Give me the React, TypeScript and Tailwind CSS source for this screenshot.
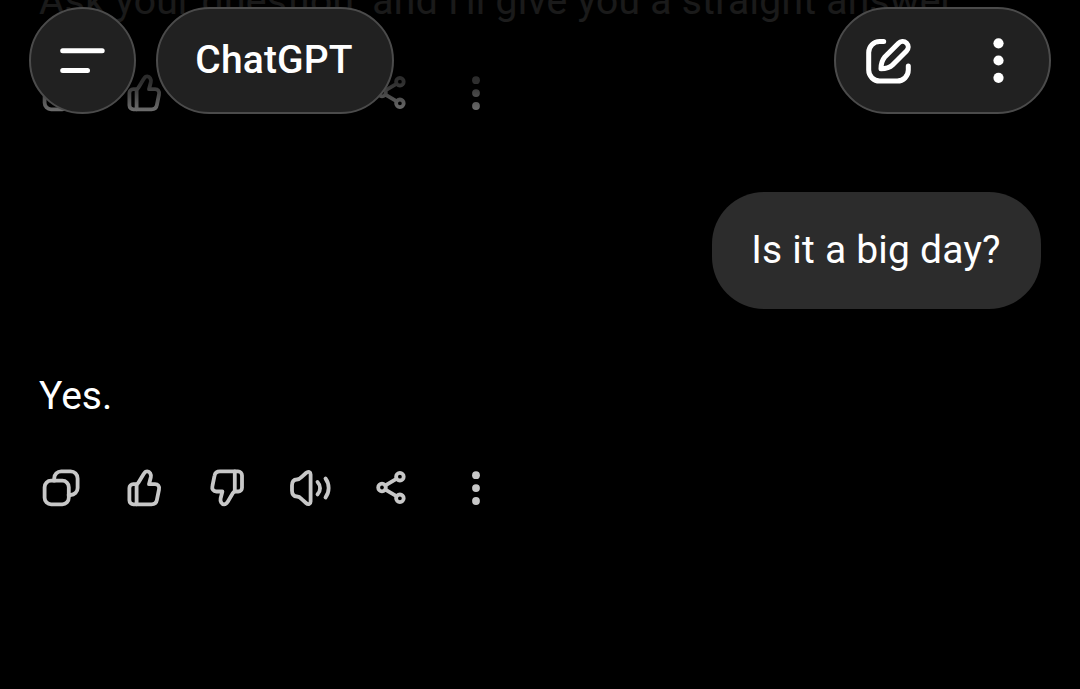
import type { ReactNode } from "react";

const Icon = ({ label, children }: { label: string; children: ReactNode }) => (
  <button aria-label={label} className="shrink-0">
    <svg
      width="42"
      height="42"
      viewBox="0 0 42 42"
      fill="none"
      stroke="currentColor"
      strokeWidth="3.8"
      strokeLinecap="round"
      strokeLinejoin="round"
      className="block"
    >
      {children}
    </svg>
  </button>
);

const Thumb = () => (
  <>
    <path d="M13.3 17.2H10.2a3.8 3.8 0 0 0-3.8 3.8V33.3a4 4 0 0 0 4 4H28.5c3 0 4.9-1.6 5.4-4.4L36 22.5c.7-3-1-5.3-4-5.3H26l1.8-7c.6-3-1-5.8-3.5-5.8-1.8 0-2.6.8-3.5 2.4L15.5 15.6c-.6 1-1.2 1.6-2.2 1.6z" />
    <path d="M13.6 17.3V37.3" />
  </>
);

const MessageActions = () => (
  <div className="mt-[41px] flex gap-[41px] text-[#c8c8c8]">
    <Icon label="Copy">
      <rect x="4.6" y="13.7" width="24.2" height="23.6" rx="6.5" />
      <path d="M14.2 13.7v-2.3a7 7 0 0 1 7-7h9.4a7 7 0 0 1 7 7v9.6a7 7 0 0 1-7 7h-2" />
    </Icon>
    <Icon label="Good response">
      <Thumb />
    </Icon>
    <Icon label="Bad response">
      <g transform="translate(42.4 41.7) rotate(180)">
        <Thumb />
      </g>
    </Icon>
    <Icon label="Read aloud">
      <path d="M3 19v4.5c0 4 1.5 6 5 6 2 0 3.2 1 5 2.8l4 3.7c2.4 2.2 4.6 1 4.6-1.5V7.5c0-2.5-2.2-3.7-4.6-1.5l-4 3.7c-1.8 1.8-3 2.8-5 2.8-3.5 0-5 2-5 6z" />
      <path d="M28.5 15c3.4 3.6 3.4 8.8 0 12.4M36.5 11.5c4.2 5.7 4.2 13.3 0 19" />
    </Icon>
    <Icon label="Share">
      <circle cx="27.9" cy="9.7" r="3.8" />
      <circle cx="10" cy="20.5" r="3.8" />
      <circle cx="27.9" cy="31.3" r="3.8" />
      <path d="M13.4 18.4l11-6.6M13.4 22.6l11 6.6" />
    </Icon>
    <Icon label="More">
      <g fill="currentColor" stroke="none">
        <circle cx="21" cy="8.2" r="3.9" />
        <circle cx="21" cy="21.1" r="3.9" />
        <circle cx="21" cy="34" r="3.9" />
      </g>
    </Icon>
  </div>
);

const Header = () => (
  <header className="absolute inset-x-0 top-0 flex h-[180px] items-start bg-linear-to-b from-black/90 from-8% via-black/77 via-46% to-transparent to-85% pt-[7px] pr-[29px] pl-[29px]">
    <button
      aria-label="Menu"
      className="flex size-[107px] items-center justify-center rounded-full border-2 border-[#4b4b4b] bg-[#212121]"
    >
      <svg width="54" height="54" viewBox="0.5 0.5 54 54" stroke="currentColor" strokeWidth="5" strokeLinecap="round">
        <path d="M7.2 17.3H46.7M7.2 37H32" />
      </svg>
    </button>
    <button className="ml-5 flex h-[107px] w-[238px] items-center justify-center rounded-full border-2 border-[#4b4b4b] bg-[#212121] pr-0.5 pb-0.5 text-[39px] font-medium tracking-[0.15px]">
      ChatGPT
    </button>
    <div className="ml-auto flex h-[107px] w-[217px] items-center justify-between rounded-full border-2 border-[#4b4b4b] bg-[#212121] pr-[23px] pl-[25px]">
      <button aria-label="New chat">
        <svg
          width="54"
          height="54"
          viewBox="0 0.2 54 54"
          fill="none"
          stroke="currentColor"
          strokeWidth="5"
          strokeLinecap="round"
          strokeLinejoin="round"
        >
          <path d="M22.7 7.7H18.7a11 11 0 0 0-11 11V36.3a11 11 0 0 0 11 11H36.3a11 11 0 0 0 11-11V32.3" />
          <path d="M20 35c0-5 .5-8 3.5-11.5L37.5 9.5c2-2 5.5-2.6 8-.3 2.4 2.4 2.2 5.8 0 8L31.5 31.3C28.5 34.2 25 35 20 35z" />
        </svg>
      </button>
      <button aria-label="Chat options">
        <svg width="54" height="54" viewBox="0.5 0.5 54 54" fill="currentColor">
          <circle cx="27" cy="9.8" r="5.1" />
          <circle cx="27" cy="27" r="5.1" />
          <circle cx="27" cy="44.3" r="5.1" />
        </svg>
      </button>
    </div>
  </header>
);

export default function App() {
  return (
    <div className="relative h-[689px] w-[1080px] overflow-hidden bg-black font-[Roboto,sans-serif] text-[39px] leading-[60px] tracking-[0.22px] text-white">
      <main className="-mt-[29px] flex flex-col px-10">
        <p className="-ml-px whitespace-nowrap tracking-[0.3px]">Ask your question, and I'll give you a straight answer.</p>
        <MessageActions />
        <div className="mt-[78px] -mr-px flex h-[117px] w-[329px] items-center justify-center self-end rounded-[52px] bg-[#2c2c2c] pr-px pb-0.5">
          Is it a big day?
        </div>
        <p className="mt-[57px] -ml-px tracking-normal">Yes.</p>
        <MessageActions />
      </main>
      <Header />
    </div>
  );
}
